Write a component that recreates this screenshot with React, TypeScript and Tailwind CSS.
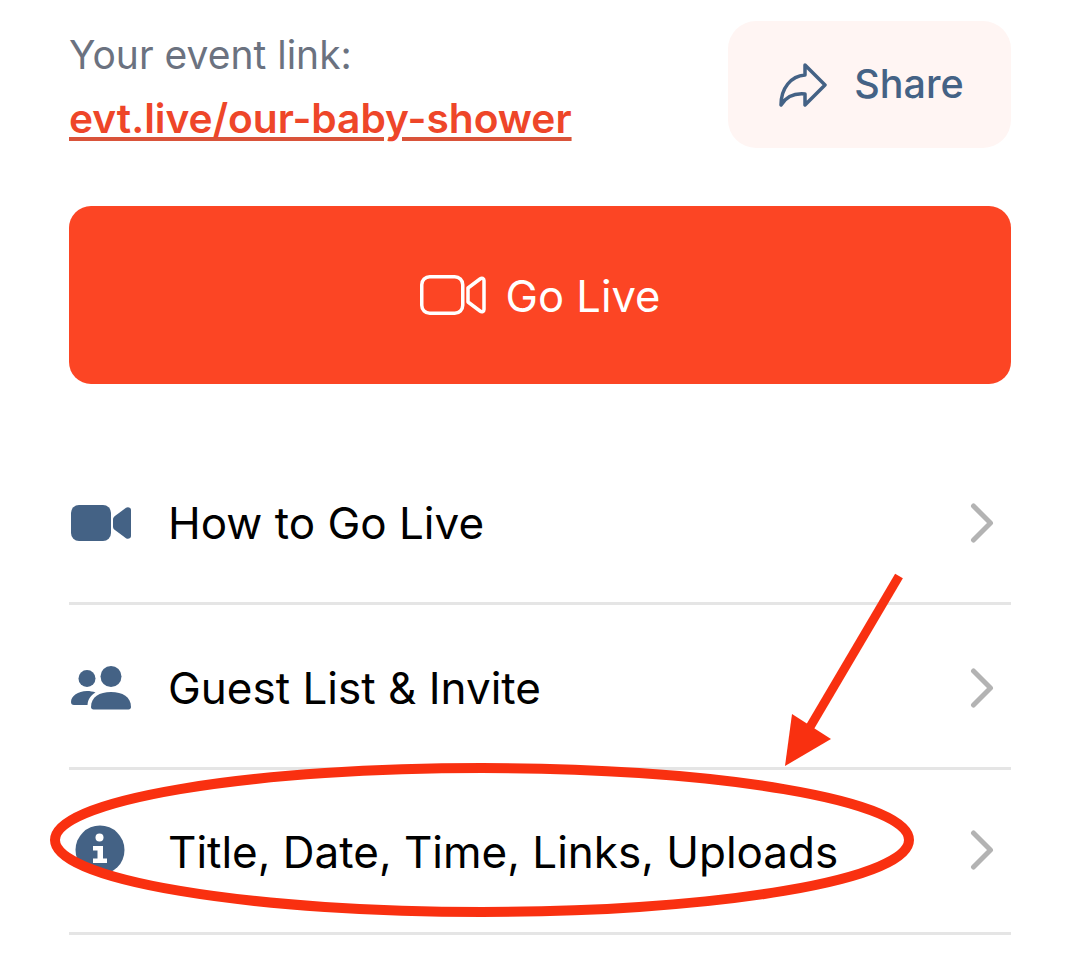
import React from 'react';

const ChevronIcon = () => (
  <svg className="w-[24px] h-[40px] shrink-0" viewBox="0 0 24 40" fill="none">
    <path d="M3.5 3 L20.5 20 L3.5 37" stroke="#b3b3b3" strokeWidth="5" strokeLinecap="round" strokeLinejoin="round" />
  </svg>
);

const VideoIcon = () => (
  <svg className="w-[60px] h-[36px]" viewBox="0 0 60 36" fill="#446285">
    <rect x="0" y="0" width="40" height="36" rx="8" />
    <path d="M42 14.5 C42 13 42.6 12 43.6 11.2 L55 2.8 C57 1.5 60 2.6 60 5 V31 C60 33.4 57 34.5 55 33.2 L43.6 24.8 C42.6 24 42 23 42 21.5 Z" />
  </svg>
);

const GuestsIcon = () => (
  <svg className="w-[60px] h-[44px]" viewBox="0 0 60 44" fill="#446285">
    <circle cx="40" cy="10.5" r="10.5" />
    <circle cx="16" cy="12.5" r="8.5" />
    <path d="M20 41 C20 31 28.5 26 40 26 C51.500 26 60 31 60 41 C60 42.500 59 43.500 57.500 43.500 H22.500 C21 43.500 20 42.500 20 41 Z" />
    <path d="M0 36 C0 30 7 25 16 25 C19 25 22 25.500 24.500 26.500 C20 29 17 33 16.500 39 H3 C1 39 0 38 0 36 Z" />
  </svg>
);

const InfoIcon = () => (
  <svg className="w-[50px] h-[50px]" viewBox="0 0 50 50">
    <circle cx="25" cy="25" r="24.500" fill="#446285" />
    <circle cx="24.500" cy="12.500" r="4" fill="#fff" />
    <path d="M18 21 H28 V33.500 H32 V38 H18 V33.500 H22.500 V25.500 H18 Z" fill="#fff" />
  </svg>
);

const ShareIcon = () => (
  <svg className="w-[48px] h-[44px] ml-[4px]" viewBox="0 0 48 44" fill="none">
    <path d="M26 2 L46 22 L26 42 V31 C15 30 7 34 2 42 C2 25 12 13 26 12 Z" stroke="#446285" strokeWidth="3.500" strokeLinejoin="round" />
  </svg>
);

const GoLiveIcon = () => (
  <svg className="w-[66px] h-[40px]" viewBox="0 0 66 40" fill="none" stroke="#fff" strokeWidth="3.500" strokeLinejoin="round">
    <rect x="1.750" y="1.750" width="41" height="36.500" rx="8" />
    <path d="M48 13 L60 4 C62 2.500 64 3.500 64 5.500 V34.500 C64 36.500 62 37.500 60 36 L48 27 Z" />
  </svg>
);

const MenuRow = ({ icon, label, lifted }: { icon: React.ReactNode; label: string; lifted?: boolean }) => (
  <div className="h-[165px] flex items-center border-b-[3px] border-[#e5e5e5] pt-[3px]">
    <div className={`w-[100px] shrink-0 flex items-center pl-[2px] ${lifted ? 'mb-[6px]' : ''}`}>{icon}</div>
    <span className={`flex-1 text-[44px] -ml-[1px] text-black whitespace-nowrap ${lifted ? 'mb-[2px]' : ''}`}>{label}</span>
    <div className={`mr-[17px] flex items-center ${lifted ? 'mb-[6px]' : ''}`}><ChevronIcon /></div>
  </div>
);

export default function App() {
  return (
    <div className="relative w-[1080px] h-[963px] bg-white overflow-hidden px-[69px] pt-[21px] font-['Inter',sans-serif]">
      <div className="flex items-start justify-between h-[127px]">
        <div className="pt-[12px]">
          <p className="text-[39px] leading-[44px] text-[#6b7280]">Your event link:</p>
          <a className="block mt-[20px] text-[40.700px] leading-[44px] font-semibold text-[#ee4629] underline decoration-[4px] decoration-[#d9533a] underline-offset-[4px]">evt.live/our-baby-shower</a>
        </div>
        <button className="w-[283px] h-[127px] rounded-[28px] bg-[#fff5f3] flex items-center justify-center gap-[27px]">
          <ShareIcon />
          <span className="text-[39.500px] font-medium text-[#446285]">Share</span>
        </button>
      </div>

      <button className="mt-[58px] w-full h-[178px] rounded-[22px] bg-[#fc4524] flex items-center justify-center gap-[20px] text-white">
        <GoLiveIcon />
        <span className="text-[43.500px] mt-[3px]">Go Live</span>
      </button>

      <div className="mt-[56px]">
        <MenuRow icon={<VideoIcon />} label="How to Go Live" />
        <MenuRow icon={<GuestsIcon />} label="Guest List & Invite" />
        <MenuRow lifted icon={<div className="ml-[4px]"><InfoIcon /></div>} label="Title, Date, Time, Links, Uploads" />
      </div>

      {/* hand drawn markup on top of the screenshot */}
      <svg className="absolute inset-0 pointer-events-none" width="1080" height="963" viewBox="0 0 1080 963" fill="none">
        <ellipse cx="482" cy="840" rx="427" ry="72" stroke="#f93010" strokeWidth="10" />
        <path d="M899 576 L810 727" stroke="#f93010" strokeWidth="9" />
        <path d="M785 766 L792 714 L831 739 Z" fill="#f93010" />
      </svg>
    </div>
  );
}
